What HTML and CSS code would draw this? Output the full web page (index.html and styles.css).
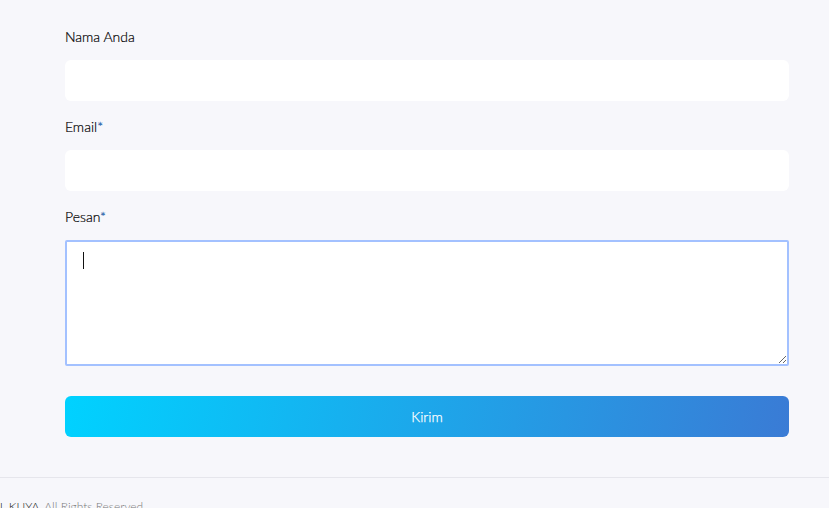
FILE: index.html
```html
<!DOCTYPE html>
<html lang="id">
<head>
<meta charset="utf-8">
<link rel="stylesheet" href="styles.css">
</head>
<body>
<main class="contact">
  <form class="form">
    <div class="group">
      <label class="label">Nama Anda</label>
      <input class="field" type="text">
    </div>
    <div class="group">
      <label class="label">Email<span class="req">*</span></label>
      <input class="field" type="email">
    </div>
    <div class="group">
      <label class="label">Pesan<span class="req">*</span></label>
      <div class="area-wrap">
        <textarea class="area"></textarea>
        <span class="caret"></span>
      </div>
    </div>
    <button class="submit" type="button">Kirim</button>
  </form>
</main>
<footer class="footer">
  <p class="copy"><span class="brand">AL KUYA</span> All Rights Reserved</p>
</footer>
</body>
</html>
```

FILE: styles.css
```css
* { box-sizing: border-box; }
html, body { margin: 0; padding: 0; }
body {
  background: #f7f7fb;
  font-family: Lato, "Open Sans", sans-serif;
  color: #222;
  overflow: hidden;
  height: 508px;
}
.contact {
  padding: 27px 40px 0 65px;
}
.form {
  width: 724px;
  display: flex;
  flex-direction: column;
}
.group {
  display: flex;
  flex-direction: column;
  margin-bottom: 16px;
}
.label {
  font-size: 14px;
  font-weight: 300;
  line-height: 20px;
  margin-bottom: 13px;
  color: #000;
  -webkit-text-stroke: 0.2px #000;
}
.req { color: #1f5fa8; -webkit-text-stroke: 0.2px #1f5fa8; }
.field {
  height: 41px;
  border: none;
  border-radius: 6px;
  background: #fff;
  outline: none;
  font-family: inherit;
  font-size: 14px;
  padding: 0 16px;
}
.area-wrap {
  position: relative;
  display: flex;
}
.area {
  flex: 1;
  height: 126px;
  border: 2px solid #a3c1ff;
  border-radius: 2px;
  background: #fff;
  outline: none;
  font-family: inherit;
  font-size: 14px;
  padding: 10px 16px;
  resize: vertical;
}
.caret {
  position: absolute;
  left: 18px;
  top: 12px;
  width: 1px;
  height: 17px;
  background: #111;
}
.submit {
  margin-top: 14px;
  height: 41px;
  border: none;
  border-radius: 6px;
  background: linear-gradient(100deg, #00d2ff 0%, #3a7bd5 100%);
  color: #fff;
  font-family: inherit;
  font-size: 14px;
  font-weight: 300;
  -webkit-text-stroke: 0.25px #fff;
}
.footer {
  margin-top: 40px;
  border-top: 1px solid #e6e6ec;
  padding-top: 21px;
}
.copy {
  margin: 0 0 0 -8px;
  font-size: 12px;
  font-weight: 300;
  line-height: 16px;
  color: #7a7a7a;
  white-space: nowrap;
}
.brand { color: #222; margin-right: 2px; }
```
